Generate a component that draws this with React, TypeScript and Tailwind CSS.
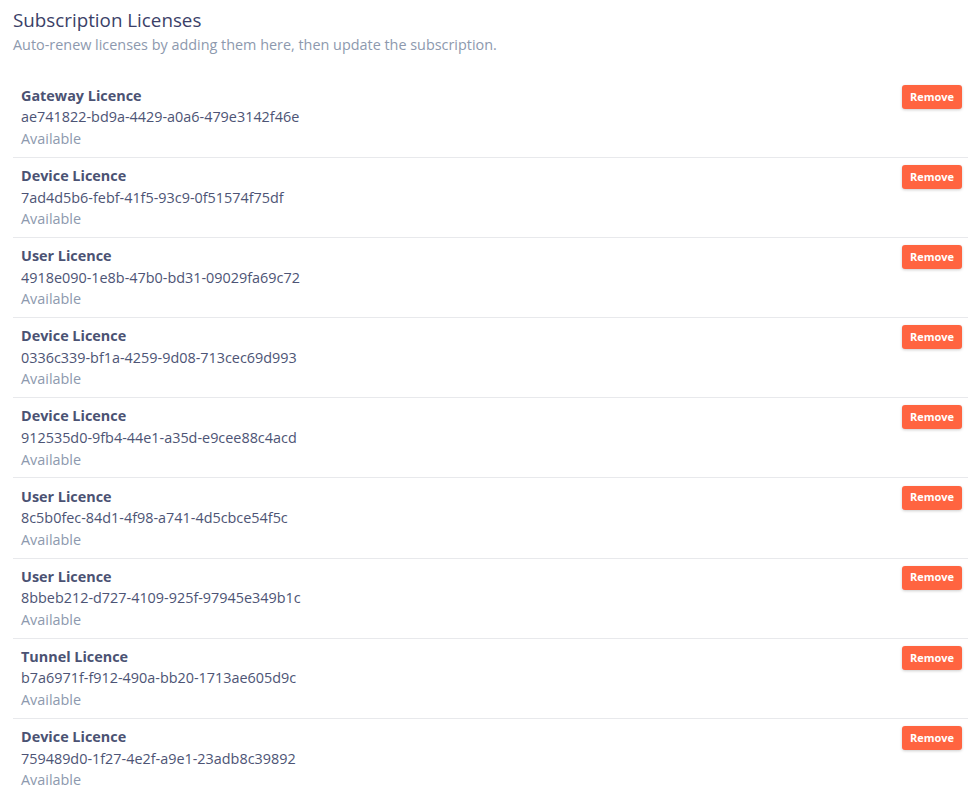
const licences = [
  { name: "Gateway Licence", id: "ae741822-bd9a-4429-a0a6-479e3142f46e" },
  { name: "Device Licence", id: "7ad4d5b6-febf-41f5-93c9-0f51574f75df" },
  { name: "User Licence", id: "4918e090-1e8b-47b0-bd31-09029fa69c72" },
  { name: "Device Licence", id: "0336c339-bf1a-4259-9d08-713cec69d993" },
  { name: "Device Licence", id: "912535d0-9fb4-44e1-a35d-e9cee88c4acd" },
  { name: "User Licence", id: "8c5b0fec-84d1-4f98-a741-4d5cbce54f5c" },
  { name: "User Licence", id: "8bbeb212-d727-4109-925f-97945e349b1c" },
  { name: "Tunnel Licence", id: "b7a6971f-f912-490a-bb20-1713ae605d9c" },
  { name: "Device Licence", id: "759489d0-1f27-4e2f-a9e1-23adb8c39892" },
];

const App = () => {
  return (
    <div className="min-h-screen bg-white pl-[13px] pr-[4px] pt-[6px] font-['Open_Sans',sans-serif]">
      <h2 className="text-[18.8px] leading-7 text-[#3b3f68]">Subscription Licenses</h2>
      <p className="text-[14.4px] leading-[21.6px] text-[#8d99ae]">
        Auto-renew licenses by adding them here, then update the subscription.
      </p>

      <div className="mt-[22px]">
        {licences.map((l, i) => (
          <div
            key={l.id}
            className={`flex items-start justify-between pl-2 pr-[6px] py-[7.2px] ${
              i < licences.length - 1 ? "border-b border-[#e8e9ec]" : ""
            }`}
          >
            <div className="text-[14.4px] leading-[21.6px]">
              <div className="font-bold text-[#4b5273]">{l.name}</div>
              <div className="text-[#4d5475]">{l.id}</div>
              <div className="text-[#8d99ae]">Available</div>
            </div>
            <button className="h-6 w-[60px] rounded-[3px] bg-[#ff6440] text-[11px] font-bold text-white shadow-[0_1px_3px_rgba(0,0,0,0.2)]">
              Remove
            </button>
          </div>
        ))}
      </div>
    </div>
  );
};

export default App;
